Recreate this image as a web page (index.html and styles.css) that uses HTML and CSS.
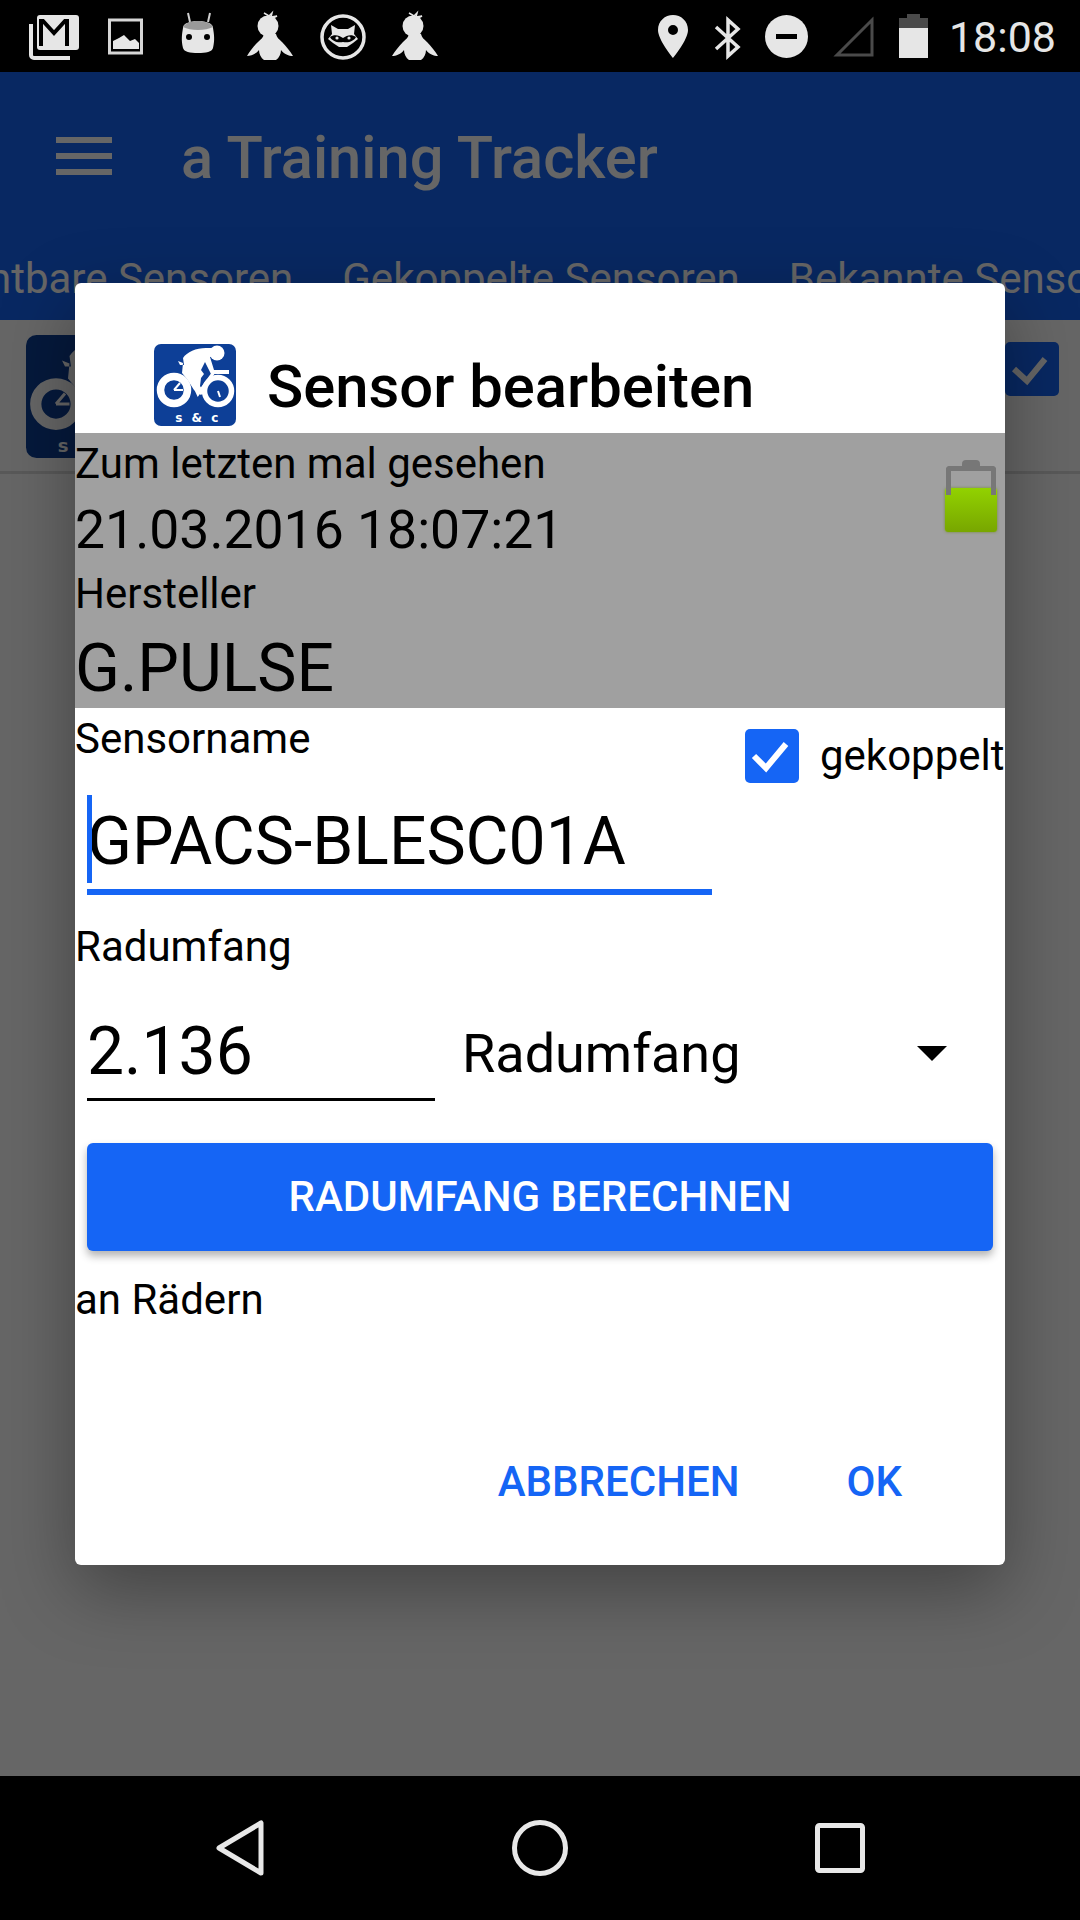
FILE: index.html
```html
<!DOCTYPE html>
<html lang="de">
<head>
  <meta charset="UTF-8" />
  <meta name="viewport" content="width=device-width, initial-scale=1"/>
  <title>a Training Tracker</title>
  <link rel="stylesheet" href="styles.css">
</head>
<body>
  <svg class="defs" width="0" height="0">
    <symbol id="bird" viewBox="0 0 46 72">
      <path d="M17 13l5 3 3-3-1 4 6-1-6 3" fill="none" stroke="#e6e6e6" stroke-width="1.5"/>
      <circle cx="21" cy="26" r="10.500" fill="#e6e6e6"/>
      <path d="M17 34c-1 4-3 5-6 8-4 4-8 9-11 14 4 0 9-2 12-6 0 4 2 8 5 10h12c3-2 5-6 5-10 3 4 8 6 12 6-3-5-7-10-11-14-3-3-5-4-6-8z" fill="#e6e6e6"/>
    </symbol>
    <symbol id="cyclist" viewBox="0 0 82 82">
      <rect width="82" height="82" rx="7" fill="#0d3f97"/>
      <circle cx="63" cy="9" r="7.500" fill="#fff"/>
      <path d="M26 21h4l-1-7C33 8 42 4 52 4h6l2 8-4 1 4 13h15v4H57l-6-12-4 8 3 4-3 4-1 8 4 6-3 3-7-5-7-11-5-6 1-10-5-2z" fill="#fff"/>
      <path d="M32 24l12 26 16-22" fill="none" stroke="#fff" stroke-width="3"/>
      <circle cx="20" cy="46" r="13.500" fill="none" stroke="#fff" stroke-width="7.500"/>
      <circle cx="64" cy="47" r="13.500" fill="none" stroke="#fff" stroke-width="5.500"/>
      <path d="M20 46l6-7M20 46h9M64 47l2 6" stroke="#fff" stroke-width="2"/>
      <text x="44" y="78" class="logo-text">s &amp; c</text>
    </symbol>
  </svg>

  <div class="status-bar">
    <div class="status-left">
      <svg class="ic-gmail" width="50" height="72" viewBox="0 0 50 72">
        <path d="M2 24v31a3 3 0 0 0 3 3h36" fill="none" stroke="#e6e6e6" stroke-width="4"/>
        <rect x="8" y="15" width="42" height="35" rx="3" fill="#e6e6e6"/>
        <path d="M12 46V21h2l11 12 11-12h2v25" fill="none" stroke="#000" stroke-width="4"/>
      </svg>
      <svg class="ic-image" width="35" height="72" viewBox="0 0 35 72">
        <rect x="1.500" y="20" width="32" height="33" fill="none" stroke="#d6d6d6" stroke-width="3"/>
        <path d="M5 49v-8l6-3 5-3 6 6 5-2 4 4v6z" fill="#e6e6e6"/>
      </svg>
      <svg class="ic-robot" width="34" height="72" viewBox="0 0 34 72">
        <path d="M7 13l2 9M29 13l-2 9" stroke="#d0d0d0" stroke-width="2"/>
        <path d="M2 28c0-5 8-7 15-7s15 2 15 7c1 6 2 12 0 20-1 4-7 5-15 5s-14-1-15-5C0 40 1 34 2 28z" fill="#e6e6e6"/>
        <path d="M2 27c2-4 9-6 15-6s13 2 15 6c-4 2-9 3-15 3S6 29 2 27z" fill="#9a9a9a"/>
        <circle cx="8" cy="37" r="3" fill="#000"/>
        <circle cx="26" cy="37" r="3" fill="#000"/>
      </svg>
      <svg class="ic-bird" width="46" height="72"><use href="#bird"/></svg>
      <svg class="ic-cat" width="46" height="72" viewBox="0 0 46 72">
        <circle cx="23" cy="37" r="21" fill="none" stroke="#e6e6e6" stroke-width="3.500"/>
        <path d="M11 25l7 4h10l7-4-1 9 4 5-5 4-6 4h-8l-6-4-5-4 4-5z" fill="#e6e6e6"/>
        <path d="M10 37c4-3 9-2 13 1 4-3 9-4 13-1-2 4-7 6-13 5-6 1-11-1-13-5z" fill="#000"/>
        <circle cx="17" cy="38" r="1.600" fill="#e6e6e6"/>
        <circle cx="29" cy="38" r="1.600" fill="#e6e6e6"/>
      </svg>
      <svg class="ic-bird" width="46" height="72"><use href="#bird"/></svg>
    </div>
    <div class="status-right">
      <svg class="ic-pin" width="30" height="72" viewBox="0 0 30 72">
        <path fill-rule="evenodd" d="M15 15c8 0 15 6 15 15 0 10-15 28-15 28S0 40 0 30c0-9 7-15 15-15zm0 10a5 5 0 1 0 0 10 5 5 0 0 0 0-10z" fill="#e6e6e6"/>
      </svg>
      <svg class="ic-bt" width="27" height="72" viewBox="0 0 27 72">
        <path d="M2 27l22 20-10 9V20l10 9-22 20" fill="none" stroke="#e6e6e6" stroke-width="3.500"/>
      </svg>
      <svg class="ic-dnd" width="43" height="72" viewBox="0 0 43 72">
        <circle cx="21.500" cy="36.500" r="21.500" fill="#e6e6e6"/>
        <rect x="11" y="34" width="21" height="5" fill="#000"/>
      </svg>
      <svg class="ic-signal" width="41" height="72" viewBox="0 0 41 72">
        <path d="M39 20v35H4z" fill="none" stroke="#4a4a4a" stroke-width="3"/>
      </svg>
      <svg class="ic-battery" width="29" height="72" viewBox="0 0 29 72">
        <path d="M0 28V18h8v-4h13v4h8v10z" fill="#4a4a4a"/>
        <rect y="28" width="29" height="30" fill="#e6e6e6"/>
      </svg>
      <span class="clock">18:08</span>
    </div>
  </div>

  <div class="screen">
    <div class="app-bar">
      <div class="toolbar">
        <div class="hamburger"><span></span><span></span><span></span></div>
        <div class="app-title">a Training Tracker</div>
      </div>
      <div class="tabs">
        <span class="tab">ntbare Sensoren</span>
        <span class="tab">Gekoppelte Sensoren</span>
        <span class="tab">Bekannte Sensoren</span>
      </div>
    </div>
    <div class="list-row">
      <svg class="row-icon" width="123" height="123"><use href="#cyclist"/></svg>
      <div class="row-check">
        <svg width="54" height="54" viewBox="0 0 54 54"><path d="M9 27l13 12L40 17" fill="none" stroke="#fff" stroke-width="6"/></svg>
      </div>
    </div>

    <div class="scrim">
      <div class="dialog" role="dialog">
        <div class="dialog-head">
          <svg class="dialog-logo" width="82" height="82"><use href="#cyclist"/></svg>
          <div class="dialog-title">Sensor bearbeiten</div>
        </div>

        <div class="info">
          <div class="info-text">
            <div class="lbl">Zum letzten mal gesehen</div>
            <div class="val-date">21.03.2016 18:07:21</div>
            <div class="lbl lbl-maker">Hersteller</div>
            <div class="val-maker">G.PULSE</div>
          </div>
          <div class="sensor-battery"></div>
        </div>

        <div class="form">
          <div class="name-row">
            <div class="name-col">
              <div class="lbl">Sensorname</div>
              <div class="name-input"><span class="cursor"></span>GPACS-BLESC01A</div>
            </div>
            <div class="paired">
              <div class="checkbox">
                <svg width="54" height="54" viewBox="0 0 54 54"><path d="M9 27l12 12L41 15" fill="none" stroke="#fff" stroke-width="6"/></svg>
              </div>
              <span class="lbl">gekoppelt</span>
            </div>
          </div>

          <div class="lbl lbl-wheel">Radumfang</div>
          <div class="wheel-row">
            <div class="wheel-input">2.136</div>
            <div class="spinner">
              <span>Radumfang</span>
              <i class="spinner-arrow"></i>
            </div>
          </div>

          <div class="calc-btn">RADUMFANG BERECHNEN</div>
          <div class="lbl lbl-wheels">an Rädern</div>
        </div>

        <div class="actions">
          <span class="action">ABBRECHEN</span>
          <span class="action">OK</span>
        </div>
      </div>
    </div>
  </div>

  <div class="nav-bar">
    <svg width="48" height="56" viewBox="0 0 48 56"><path d="M45 3v50L3 28z" fill="none" stroke="#e8e8e8" stroke-width="5" stroke-linejoin="round"/></svg>
    <svg width="56" height="56" viewBox="0 0 56 56"><circle cx="28" cy="28" r="25.500" fill="none" stroke="#e8e8e8" stroke-width="5"/></svg>
    <svg width="50" height="50" viewBox="0 0 50 50"><rect x="2.500" y="2.500" width="45" height="45" rx="2" fill="none" stroke="#e8e8e8" stroke-width="5"/></svg>
  </div>
</body>
</html>
```

FILE: styles.css
```css
* {
  box-sizing: border-box;
}
body {
  font-family: Roboto, 'Noto Sans', sans-serif;
  margin: 0;
  width: 1080px;
  height: 1920px;
  overflow: hidden;
  background: #000;
  color: #000;
  display: flex;
  flex-direction: column;
}
.defs {
  position: absolute;
}
.logo-text {
  font-family: 'DejaVu Sans', sans-serif;
  font-size: 12px;
  font-weight: 700;
  letter-spacing: 2.5px;
  text-anchor: middle;
  fill: #fff;
}

/* status bar */
.status-bar {
  height: 72px;
  flex: none;
  display: flex;
  justify-content: space-between;
  background: #000;
}
.status-left,
.status-right {
  display: flex;
  align-items: flex-start;
}
.status-left {
  padding-left: 29px;
}
.status-right {
  padding-right: 24px;
}
.ic-image { margin-left: 29px; }
.ic-robot { margin-left: 38px; }
.ic-bird { margin-left: 32px; }
.ic-cat { margin-left: 27px; }
.ic-cat + .ic-bird { margin-left: 26px; }
.ic-bt { margin-left: 26px; }
.ic-dnd { margin-left: 24px; }
.ic-signal { margin-left: 25px; }
.ic-battery { margin-left: 25px; }
.clock {
  margin-left: 21px;
  font-size: 43px;
  line-height: 74px;
  color: #e6e6e6;
}

/* app behind the dialog */
.screen {
  position: relative;
  flex: 1;
  background: #fff;
  overflow: hidden;
}
.app-bar {
  height: 248px;
  background: #1565f5;
  color: #fff;
}
.toolbar {
  height: 168px;
  display: flex;
  align-items: center;
  padding-left: 56px;
}
.hamburger {
  width: 56px;
  display: flex;
  flex-direction: column;
  gap: 10px;
}
.hamburger span {
  height: 6px;
  background: #fff;
}
.app-title {
  margin: 4px 0 0 69px;
  font-size: 59.600px;
  font-weight: 500;
}
.tabs {
  display: flex;
  gap: 49px;
  margin-left: -12px;
  white-space: nowrap;
  font-size: 42px;
  line-height: 78px;
}
.list-row {
  height: 154px;
  border-bottom: 3px solid #dedede;
  padding: 15px 21px 0 26px;
  display: flex;
  justify-content: space-between;
  align-items: flex-start;
}
.row-check {
  width: 54px;
  height: 54px;
  margin-top: 7px;
  border-radius: 5px;
  background: #1565f5;
}
.scrim {
  position: absolute;
  inset: 0;
  background: rgba(0,0,0,0.6);
}

/* dialog */
.dialog {
  position: absolute;
  left: 75px;
  top: 211px;
  width: 930px;
  height: 1282px;
  background: #fff;
  border-radius: 6px;
  box-shadow: 0 24px 72px rgba(0,0,0,0.35);
  display: flex;
  flex-direction: column;
}
.dialog-head {
  height: 150px;
  flex: none;
  padding: 61px 0 0 79px;
  display: flex;
  align-items: flex-start;
}
.dialog-title {
  margin-left: 31px;
  font-size: 59.800px;
  font-weight: 500;
  line-height: 86px;
}
.info {
  height: 275px;
  flex: none;
  background: #a0a0a0;
  padding: 6px 8px 0 0;
  display: flex;
  justify-content: space-between;
}
.lbl {
  font-size: 42px;
  line-height: 50px;
}
.val-date {
  font-size: 53.500px;
  line-height: 64px;
  margin-top: 9px;
}
.lbl-maker {
  margin-top: 7px;
}
.val-maker {
  font-size: 66px;
  line-height: 78px;
  margin-top: 11px;
}
.sensor-battery {
  position: relative;
  width: 52px;
  height: 44px;
  margin-top: 49px;
  border-radius: 3px;
  background: linear-gradient(#92d200, #78a600);
  box-shadow: 0 0 3px rgba(100,130,0,0.7);
  filter: blur(0.6px);
}
.sensor-battery::before {
  content: "";
  position: absolute;
  left: 1px;
  right: 1px;
  top: -22px;
  height: 24px;
  border: 5px solid #777;
  border-bottom: none;
  border-radius: 4px 4px 0 0;
}
.sensor-battery::after {
  content: "";
  position: absolute;
  left: 17px;
  top: -28px;
  width: 18px;
  height: 8px;
  border-radius: 4px 4px 0 0;
  background: #777;
}
.form {
  padding: 0 12px 0 0;
}
.name-row {
  display: flex;
  justify-content: space-between;
}
.name-col {
  padding-top: 6px;
}
.name-input {
  position: relative;
  width: 625px;
  height: 131px;
  margin: 0 0 0 12px;
  padding-top: 39px;
  font-size: 66px;
  line-height: 78px;
  border-bottom: 6px solid #1565f5;
}
.cursor {
  position: absolute;
  left: 0;
  top: 31px;
  width: 5px;
  height: 88px;
  background: #1565f5;
}
.paired {
  display: flex;
  align-items: center;
  height: 54px;
  margin: 21px -12px 0 0;
}
.checkbox {
  width: 54px;
  height: 54px;
  border-radius: 5px;
  background: #1565f5;
  margin-right: 21px;
}
.paired .lbl {
  width: 185px;
}
.lbl-wheel {
  margin-top: 27px;
}
.wheel-row {
  display: flex;
  margin-top: 11px;
}
.wheel-input {
  width: 348px;
  height: 118px;
  margin-left: 12px;
  padding-top: 30px;
  font-size: 66px;
  line-height: 78px;
  border-bottom: 3px solid #000;
}
.spinner {
  flex: 1;
  display: flex;
  justify-content: space-between;
  align-items: center;
  padding: 22px 46px 0 27px;
  height: 118px;
  font-size: 54px;
}
.spinner-arrow {
  width: 0;
  height: 0;
  border-left: 15px solid transparent;
  border-right: 15px solid transparent;
  border-top: 15px solid #000;
}
.calc-btn {
  width: 906px;
  height: 108px;
  margin: 42px 0 0 12px;
  border-radius: 6px;
  background: #1565f5;
  color: #fff;
  font-size: 42px;
  font-weight: 500;
  line-height: 108px;
  text-align: center;
  box-shadow: 0 5px 8px rgba(0,0,0,0.3);
}
.lbl-wheels {
  margin-top: 24px;
}
.actions {
  margin-top: auto;
  height: 108px;
  display: flex;
  justify-content: flex-end;
  gap: 107px;
  padding: 0 103px 0 0;
  align-items: flex-start;
  color: #1565f5;
  font-size: 42px;
  font-weight: 500;
  line-height: 50px;
}

/* nav bar */
.nav-bar {
  height: 144px;
  flex: none;
  background: #000;
  display: flex;
  align-items: center;
  padding-left: 216px;
}
.nav-bar svg:nth-child(2) {
  margin-left: 248px;
}
.nav-bar svg:nth-child(3) {
  margin-left: 247px;
}
```
